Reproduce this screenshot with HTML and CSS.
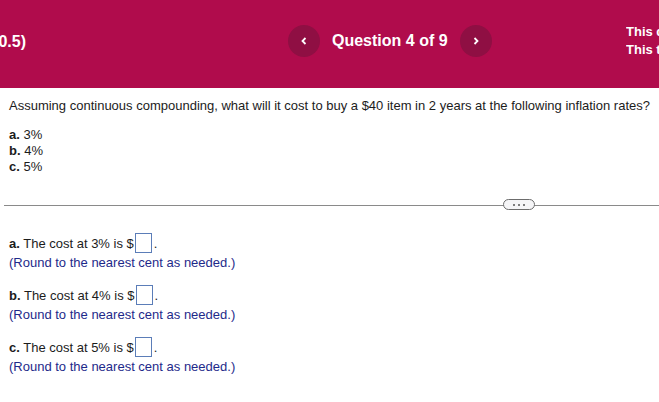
FILE: index.html
```html
<!DOCTYPE html>
<html>
<head>
<meta charset="utf-8">
<link rel="stylesheet" href="styles.css">
</head>
<body>
<header class="top">
  <div class="crumb"><span>Homework: Section 10.5)</span></div>
  <nav class="qnav">
    <button class="circ" aria-label="Previous"><svg width="10" height="10" viewBox="0 0 10 10"><path d="M6.5 2 L3.5 5 L6.5 8" fill="none" stroke="#fff" stroke-width="1.8"/></svg></button>
    <span class="qtitle">Question 4 of 9</span>
    <button class="circ" aria-label="Next"><svg width="10" height="10" viewBox="0 0 10 10"><path d="M3.5 2 L6.5 5 L3.5 8" fill="none" stroke="#fff" stroke-width="1.8"/></svg></button>
  </nav>
  <div class="status">
    <div>This question: 1 point(s) possible</div>
    <div>This test: 9 point(s) possible</div>
  </div>
</header>
<main class="content">
  <p class="question">Assuming continuous compounding, what will it cost to buy a $40 item in 2 years at the following inflation rates?</p>
  <div class="opts">
    <div><b>a.</b> 3%</div>
    <div><b>b.</b> 4%</div>
    <div><b>c.</b> 5%</div>
  </div>
</main>
<div class="divider">
  <span class="pill"><i></i><i></i><i></i></span>
</div>
<section class="answers">
  <div class="ans">
    <div class="line"><b>a.</b> The cost at 3% is $<span class="box"></span>.</div>
    <div class="hint">(Round to the nearest cent as needed.)</div>
  </div>
  <div class="ans">
    <div class="line"><b>b.</b> The cost at 4% is $<span class="box"></span>.</div>
    <div class="hint">(Round to the nearest cent as needed.)</div>
  </div>
  <div class="ans">
    <div class="line"><b>c.</b> The cost at 5% is $<span class="box"></span>.</div>
    <div class="hint">(Round to the nearest cent as needed.)</div>
  </div>
</section>
</body>
</html>
```
FILE: styles.css
```css
html, body {
  margin: 0;
  padding: 0;
  background: #fff;
  font-family: "Liberation Sans", Arial, sans-serif;
  overflow: hidden;
}
.top {
  height: 88px;
  background: #b00c4c;
  color: #fff;
  display: flex;
  align-items: flex-start;
  overflow: hidden;
}
.crumb {
  width: 26px;
  flex: none;
  display: flex;
  justify-content: flex-end;
  overflow: hidden;
  white-space: nowrap;
  font-weight: bold;
  font-size: 16px;
  line-height: 18px;
  margin-top: 33px;
}
.qnav {
  display: flex;
  align-items: center;
  gap: 12px;
  margin-left: 262px;
  margin-top: 25px;
  flex: none;
}
.circ {
  width: 32px;
  height: 32px;
  border-radius: 50%;
  border: none;
  padding: 0;
  background: #8f0f43;
  display: flex;
  align-items: center;
  justify-content: center;
}
.qtitle {
  font-weight: bold;
  font-size: 16px;
}
.status {
  margin-left: auto;
  width: 33px;
  flex: none;
  overflow: hidden;
  white-space: nowrap;
  font-weight: bold;
  font-size: 13px;
  line-height: 18px;
  margin-top: 23px;
}
.content {
  padding: 0 9px;
  color: #1c1c1c;
  font-size: 13px;
  line-height: 16px;
}
.question {
  margin: 10px 0 0;
}
.opts {
  margin-top: 13px;
}
.divider {
  margin: 25px 0 0 4px;
  height: 10px;
  position: relative;
  display: flex;
  align-items: center;
}
.divider::before {
  content: "";
  flex: 1;
  height: 1px;
  background: #8a8a8a;
}
.pill {
  position: absolute;
  left: 499px;
  top: -1px;
  width: 30px;
  height: 9px;
  border: 1px solid #6c6c6c;
  border-radius: 6px;
  background: #f5f5f7;
  display: flex;
  align-items: center;
  justify-content: center;
  gap: 3px;
}
.pill i {
  width: 2px;
  height: 2px;
  background: #555;
  border-radius: 50%;
}
.answers {
  padding: 22px 9px 0;
  font-size: 13px;
  color: #1c1c1c;
}
.ans {
  margin-bottom: 13px;
}
.line {
  display: flex;
  align-items: center;
  height: 22px;
  white-space: pre;
}
.box {
  display: inline-block;
  width: 15px;
  height: 18px;
  border: 1px solid #5b7db8;
  margin: 0 2px 0 1px;
  background: #fff;
}
.hint {
  color: #1e2a8a;
  line-height: 17px;
}
```
